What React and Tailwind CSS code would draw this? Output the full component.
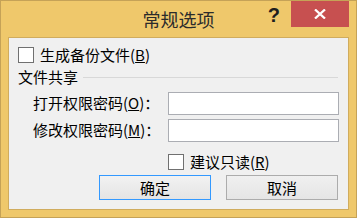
export default function App() {
  const font = { fontFamily: '"Noto Sans CJK SC", "Liberation Sans", sans-serif' };

  return (
    <div
      className="w-[357px] h-[218px] bg-[#efc86b] border border-[#c5a257] flex flex-col text-[15px] text-black"
      style={font}
    >
      {/* Title bar */}
      <div className="relative h-[36px] flex items-center justify-center">
        <span className="text-[18px] text-[#2b2b2b] leading-none">常规选项</span>
        <div className="absolute right-[7px] top-0 flex items-start">
          <span className="mt-[3px] mr-[11px] text-[20px] font-bold leading-[22px] text-[#1e1e1e] font-['Liberation_Sans']">
            ?
          </span>
          <div className="w-[58px] h-[26px] bg-[#c75050] flex items-center justify-center">
            <svg width="12" height="10" viewBox="0 0 12 10">
              <path d="M1 0.5 L11 9.5 M11 0.5 L1 9.5" stroke="#fff" strokeWidth="2.3" />
            </svg>
          </div>
        </div>
      </div>

      {/* Client area */}
      <div className="mx-[7px] h-[173px] bg-[#f0f0f0] border border-[#d0ac5e] px-[9px] flex flex-col">
        {/* backup checkbox */}
        <div className="mt-[9px] h-[16px] flex items-center">
          <div className="shrink-0 w-[16px] h-[16px] bg-white border border-[#707070]" />
          <span className="ml-[6px] leading-[16px]">
            生成备份文件(<span className="underline">B</span>)
          </span>
        </div>

        {/* group: file sharing */}
        <div className="mt-[6px] h-[16px] flex items-center">
          <span className="leading-[16px]">文件共享</span>
          <div className="ml-[5px] w-[255px] h-px bg-[#d8d8d8]" />
        </div>

        {/* open password */}
        <div className="mt-[7px] h-[23px] flex items-center">
          <span className="shrink-0 ml-[15px] w-[135px] leading-[16px] -mt-[2px]">
            打开权限密码(<span className="underline">O</span>)：
          </span>
          <div className="shrink-0 w-[171px] h-[23px] bg-white border border-[#abadb3]" />
        </div>

        {/* modify password */}
        <div className="mt-[4px] h-[23px] flex items-center">
          <span className="shrink-0 ml-[15px] w-[135px] leading-[16px] -mt-[2px]">
            修改权限密码(<span className="underline">M</span>)：
          </span>
          <div className="shrink-0 w-[171px] h-[23px] bg-white border border-[#abadb3]" />
        </div>

        {/* read only */}
        <div className="mt-[12px] h-[16px] flex items-center ml-[150px]">
          <div className="shrink-0 w-[16px] h-[16px] bg-white border border-[#707070]" />
          <span className="ml-[6px] leading-[16px]">
            建议只读(<span className="underline">R</span>)
          </span>
        </div>

        {/* buttons */}
        <div className="mt-[5px] flex ml-[81px] gap-[15px]">
          <button className="w-[112px] h-[25px] border border-[#3399ff] bg-gradient-to-b from-[#f2f2f2] to-[#e4e4e4] flex items-center justify-center leading-none">
            确定
          </button>
          <button className="w-[112px] h-[25px] border border-[#acacac] bg-gradient-to-b from-[#f0f0f0] to-[#e5e5e5] flex items-center justify-center leading-none">
            取消
          </button>
        </div>
      </div>
    </div>
  );
}
